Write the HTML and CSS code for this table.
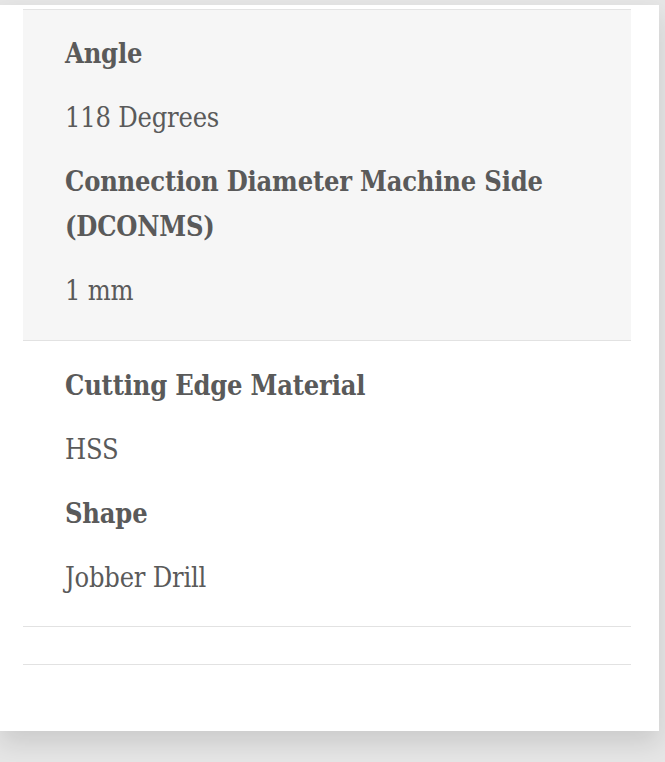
FILE: index.html
```html
<!DOCTYPE html>
<html>
<head>
<meta charset="utf-8">
<link rel="stylesheet" href="styles.css">
</head>
<body>
<div class="card">
  <div class="specs">
    <dl class="group shaded">
      <dt>Angle</dt>
      <dd>118 Degrees</dd>
      <dt>Connection Diameter Machine Side (DCONMS)</dt>
      <dd>1 mm</dd>
    </dl>
    <dl class="group">
      <dt>Cutting Edge Material</dt>
      <dd>HSS</dd>
      <dt>Shape</dt>
      <dd>Jobber Drill</dd>
    </dl>
    <div class="group empty"></div>
  </div>
</div>
</body>
</html>
```
FILE: styles.css
```css
html, body {
  margin: 0;
  padding: 0;
}
body {
  background: #e6e6e6;
  height: 762px;
  overflow: hidden;
  font-family: "DejaVu Serif Condensed", "DejaVu Serif", serif;
  color: #5a5a5a;
}
.card {
  margin-top: 5px;
  width: 659px;
  height: 726px;
  background: #fff;
  box-shadow: 0 12px 24px rgba(0, 0, 0, 0.12);
  padding-top: 4px;
  box-sizing: border-box;
}
.specs {
  margin: 0 28px 0 23px;
  border-top: 1px solid #e4e4e4;
}
.group {
  margin: 0;
  padding: 21px 42px 27px;
  border-bottom: 1px solid #e2e2e2;
}
.group + .group {
  padding-top: 22px;
  padding-bottom: 26px;
}
.shaded {
  background: #f6f6f6;
}
.group.empty {
  height: 38px;
  padding: 0;
  box-sizing: border-box;
}
dt, dd {
  margin: 0;
  font-size: 27px;
  line-height: 45px;
  letter-spacing: -0.2px;
}
dt {
  font-weight: bold;
}
dd {
  margin: 19px 0;
}
dd:last-child {
  margin-bottom: 0;
}
```
